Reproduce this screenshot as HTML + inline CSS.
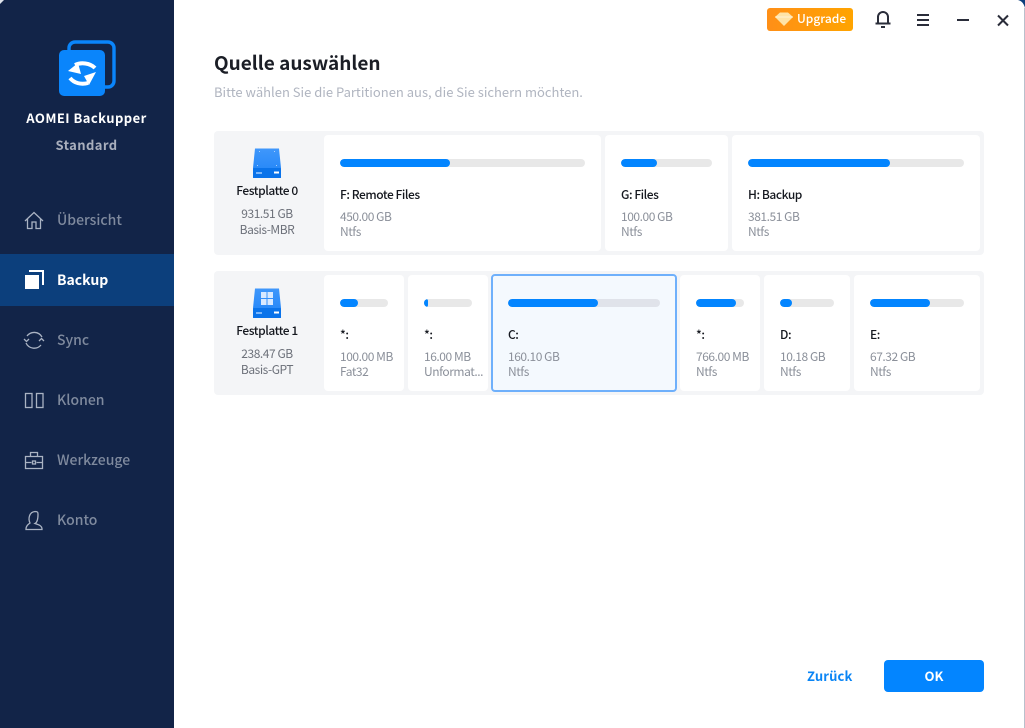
<!DOCTYPE html>
<html><head><meta charset="utf-8"><style>
*{box-sizing:border-box;margin:0;padding:0}
html,body{width:1025px;height:728px;overflow:hidden;background:#fff}
body{position:relative;font-family:"Noto Sans CJK SC","Liberation Sans",sans-serif}
.t{position:absolute;white-space:nowrap;line-height:16px}
.side{position:absolute;left:0;top:0;width:174px;height:728px;background:#122448}
.nav{position:absolute;left:57px;font-size:14px;font-weight:500;color:#7f8a9e;line-height:20px}
.ic{position:absolute;left:0;top:0}
.row{position:absolute;left:214px;width:770px;height:124px;background:#f4f5f7;border-radius:4px}
.card{position:absolute;background:#fff;border-radius:4px}
.bar{position:absolute;height:8px;background:#e8e8e8;border-radius:4px;overflow:hidden}
.bar i{display:block;height:8px;background:#0385ff;border-radius:4px}
.n{font-size:12px;color:#15181f;font-weight:500;letter-spacing:-.45px}
.s{font-size:12px;color:#8b909a;letter-spacing:-.45px}
.c{text-align:center;width:110px;left:212px}
</style></head><body>
<div class="side"></div>
<div style="position:absolute;left:0;top:254px;width:174px;height:52px;background:#0c3f7c"></div>
<svg class="ic" width="174" height="728" fill="none">
<path d="M0 0h4L0 4z" fill="#dfe3ea"/>
<rect x="69" y="42" width="45" height="45" rx="6" stroke="#0a85fb" stroke-width="3.4"/>
<rect x="59" y="50" width="46" height="46" rx="5" fill="#0a85fb"/>
<path d="M75 65c6-3 15-2 20 3" stroke="#fff" stroke-width="4"/>
<path d="M68 71l10-8 3 11z" fill="#fff"/>
<path d="M70 78c4 5 11 7 18 5" stroke="#fff" stroke-width="4"/>
<path d="M96 72l-12 4 5 9z" fill="#fff"/>
<g stroke="#aab3c3" stroke-width="1.3">
<path d="M25 221l9-8.500 9 8.500M27.500 219v9.500h4.500v-6.500h4v6.500h4.500v-9.500"/>
<path d="M42 337a9 9 0 0 0-15-1M26 343a9 9 0 0 0 15 2M24 339l2.500 2.500 2.500-2.500M39 341l2.500-2.500 2.500 2.500"/>
<rect x="25.500" y="393.500" width="6.500" height="14"/><rect x="36.500" y="393.500" width="6.500" height="14"/>
<path d="M25.500 456.500h17v12h-17zM30.500 456.500v-4h7v4M25.500 462.500h6M36.500 462.500h6"/><rect x="32.500" y="461" width="3" height="3"/>
<path d="M30 523c-2-4-1-11 5-11.500 3 0 3 1 3 3 0 5-1 8-3 9 3 1 7 2 7 5.500v.5H26v-.5c0-3 2-4.500 4-6z"/>
</g>
<path d="M29 271h14v14" stroke="#fff" stroke-width="2"/>
<rect x="25" y="275" width="14" height="14" fill="#fff"/>
</svg>
<div class="t" style="left:0;width:173px;text-align:center;top:110px;font-size:13px;font-weight:700;color:#fff;letter-spacing:.45px">AOMEI Backupper</div>
<div class="t" style="left:0;width:173px;text-align:center;top:137px;font-size:13px;font-weight:700;color:#a9afbd;letter-spacing:.4px">Standard</div>
<div class="t nav" style="top:210px">Übersicht</div>
<div class="t nav" style="top:270px;color:#fff;font-weight:700">Backup</div>
<div class="t nav" style="top:330px">Sync</div>
<div class="t nav" style="top:390px">Klonen</div>
<div class="t nav" style="top:450px">Werkzeuge</div>
<div class="t nav" style="top:510px">Konto</div>

<div style="position:absolute;left:767px;top:8px;width:86px;height:23px;border-radius:3px;background:linear-gradient(90deg,#ff8f17,#ffa400)"></div>
<svg class="ic" width="1025" height="40" fill="none">
<path d="M775 17l5-4.500h8l5 4.500-9 9z" fill="#ffe3a8"/>
<path d="M775 17h18" stroke="#fff2d4" stroke-width="1"/>
<g stroke="#2a2d3a" stroke-width="2">
<path d="M878 23v-6a5 5 0 0 1 10 0v6M875.500 23.500h15" /><path d="M881 27h4"/>
<path d="M917 15h12M917 20h12M917 25h12M957 20h12M998 15.500l10 10M1008 15.500l-10 10"/>
</g>
<path d="M1018 0h7v8c-1-4-3-7-7-8z" fill="#0c3f7c"/>
</svg>
<div class="t" style="left:797px;top:11px;font-size:12px;font-weight:500;color:#fff">Upgrade</div>

<div class="t" style="left:214px;top:50px;font-size:19px;line-height:26px;font-weight:700;color:#1b1e26">Quelle auswählen</div>
<div class="t" style="left:214px;top:84px;font-size:13px;color:#b0b5c0">Bitte wählen Sie die Partitionen aus, die Sie sichern möchten.</div>

<div class="row" style="top:131px"></div>
<div class="row" style="top:271px"></div>

<svg class="ic" width="300" height="330">
<defs><linearGradient id="g" x1="0" y1="0" x2="0" y2="1"><stop offset="0" stop-color="#3f97fb"/><stop offset="1" stop-color="#1f83f7"/></linearGradient></defs>
<path d="M255 148.500h24l2 19.500v10h-28v-10z" fill="url(#g)"/><rect x="253" y="168" width="28" height="10" rx="1" fill="#0a73ea"/><rect x="274" y="171.500" width="5" height="2" fill="#fff"/>
<path d="M256 172h6v2h-6z" fill="#7ab6fb"/>
<path d="M259 151h1v1h-1zM274 151h1v1h-1zM257 165h1v1h-1zM276 165h1v1h-1z" fill="#a8d0fd"/>
<path d="M255 288.500h24l2 19.500v10h-28v-10z" fill="url(#g)"/><rect x="253" y="308" width="28" height="10" rx="1" fill="#0a73ea"/><rect x="274" y="311.500" width="5" height="2" fill="#fff"/>
<path d="M256 312h6v2h-6z" fill="#7ab6fb"/>
<path d="M261 292h5.500v6h-5.500zM267.500 292h5.500v6h-5.500zM261 299h5.500v6h-5.500zM267.500 299h5.500v6h-5.500z" fill="#d8e9ff"/>
</svg>
<div class="t n c" style="top:183px">Festplatte 0</div>
<div class="t s c" style="top:206px;color:#6d717a">931.51 GB</div>
<div class="t s c" style="top:222px;color:#6d717a">Basis-MBR</div>
<div class="t n c" style="top:323px">Festplatte 1</div>
<div class="t s c" style="top:346px;color:#6d717a">238.47 GB</div>
<div class="t s c" style="top:362px;color:#6d717a">Basis-GPT</div>

<!-- row 0 -->
<div class="card" style="left:324px;top:135px;width:277px;height:116px"></div>
<div class="card" style="left:605px;top:135px;width:123px;height:116px"></div>
<div class="card" style="left:732px;top:135px;width:248px;height:116px"></div>
<div class="bar" style="left:340px;top:159px;width:245px"><i style="width:110px"></i></div>
<div class="bar" style="left:621px;top:159px;width:91px"><i style="width:36px"></i></div>
<div class="bar" style="left:748px;top:159px;width:216px"><i style="width:142px"></i></div>
<div class="t n" style="left:340px;top:187px">F: Remote Files</div><div class="t s" style="left:340px;top:209px">450.00 GB</div><div class="t s" style="left:340px;top:224px">Ntfs</div>
<div class="t n" style="left:621px;top:187px">G: Files</div><div class="t s" style="left:621px;top:209px">100.00 GB</div><div class="t s" style="left:621px;top:224px">Ntfs</div>
<div class="t n" style="left:748px;top:187px">H: Backup</div><div class="t s" style="left:748px;top:209px">381.51 GB</div><div class="t s" style="left:748px;top:224px">Ntfs</div>

<!-- row 1 -->
<div class="card" style="left:324px;top:275px;width:80px;height:116px"></div>
<div class="card" style="left:408px;top:275px;width:80px;height:116px"></div>
<div class="card" style="left:491px;top:274px;width:186px;height:118px;background:#f4f9fe;border:2px solid #6fb0fb"></div>
<div class="card" style="left:680px;top:275px;width:80px;height:116px"></div>
<div class="card" style="left:764px;top:275px;width:86px;height:116px"></div>
<div class="card" style="left:854px;top:275px;width:126px;height:116px"></div>
<div class="bar" style="left:340px;top:299px;width:48px"><i style="width:18px"></i></div>
<div class="bar" style="left:424px;top:299px;width:48px"><i style="width:4px"></i></div>
<div class="bar" style="left:508px;top:299px;width:152px;background:#e0e3ea"><i style="width:90px"></i></div>
<div class="bar" style="left:696px;top:299px;width:48px"><i style="width:40px"></i></div>
<div class="bar" style="left:780px;top:299px;width:54px"><i style="width:12px"></i></div>
<div class="bar" style="left:870px;top:299px;width:94px"><i style="width:60px"></i></div>
<div class="t n" style="left:340px;top:327px">*:</div><div class="t s" style="left:340px;top:349px">100.00 MB</div><div class="t s" style="left:340px;top:364px">Fat32</div>
<div class="t n" style="left:424px;top:327px">*:</div><div class="t s" style="left:424px;top:349px">16.00 MB</div><div class="t s" style="left:424px;top:364px">Unformat...</div>
<div class="t n" style="left:508px;top:327px">C:</div><div class="t s" style="left:508px;top:349px">160.10 GB</div><div class="t s" style="left:508px;top:364px">Ntfs</div>
<div class="t n" style="left:696px;top:327px">*:</div><div class="t s" style="left:696px;top:349px">766.00 MB</div><div class="t s" style="left:696px;top:364px">Ntfs</div>
<div class="t n" style="left:780px;top:327px">D:</div><div class="t s" style="left:780px;top:349px">10.18 GB</div><div class="t s" style="left:780px;top:364px">Ntfs</div>
<div class="t n" style="left:870px;top:327px">E:</div><div class="t s" style="left:870px;top:349px">67.32 GB</div><div class="t s" style="left:870px;top:364px">Ntfs</div>

<div class="t" style="left:807px;top:668px;font-size:13px;font-weight:700;color:#0a85f5;letter-spacing:.15px">Zurück</div>
<div style="position:absolute;left:884px;top:660px;width:100px;height:32px;border-radius:4px;background:#0385ff;color:#fff;font-size:13px;font-weight:700;text-align:center;line-height:32px">OK</div>
<div style="position:absolute;left:1024px;top:8px;width:1px;height:720px;background:#b9c0cc"></div>
</body></html>
